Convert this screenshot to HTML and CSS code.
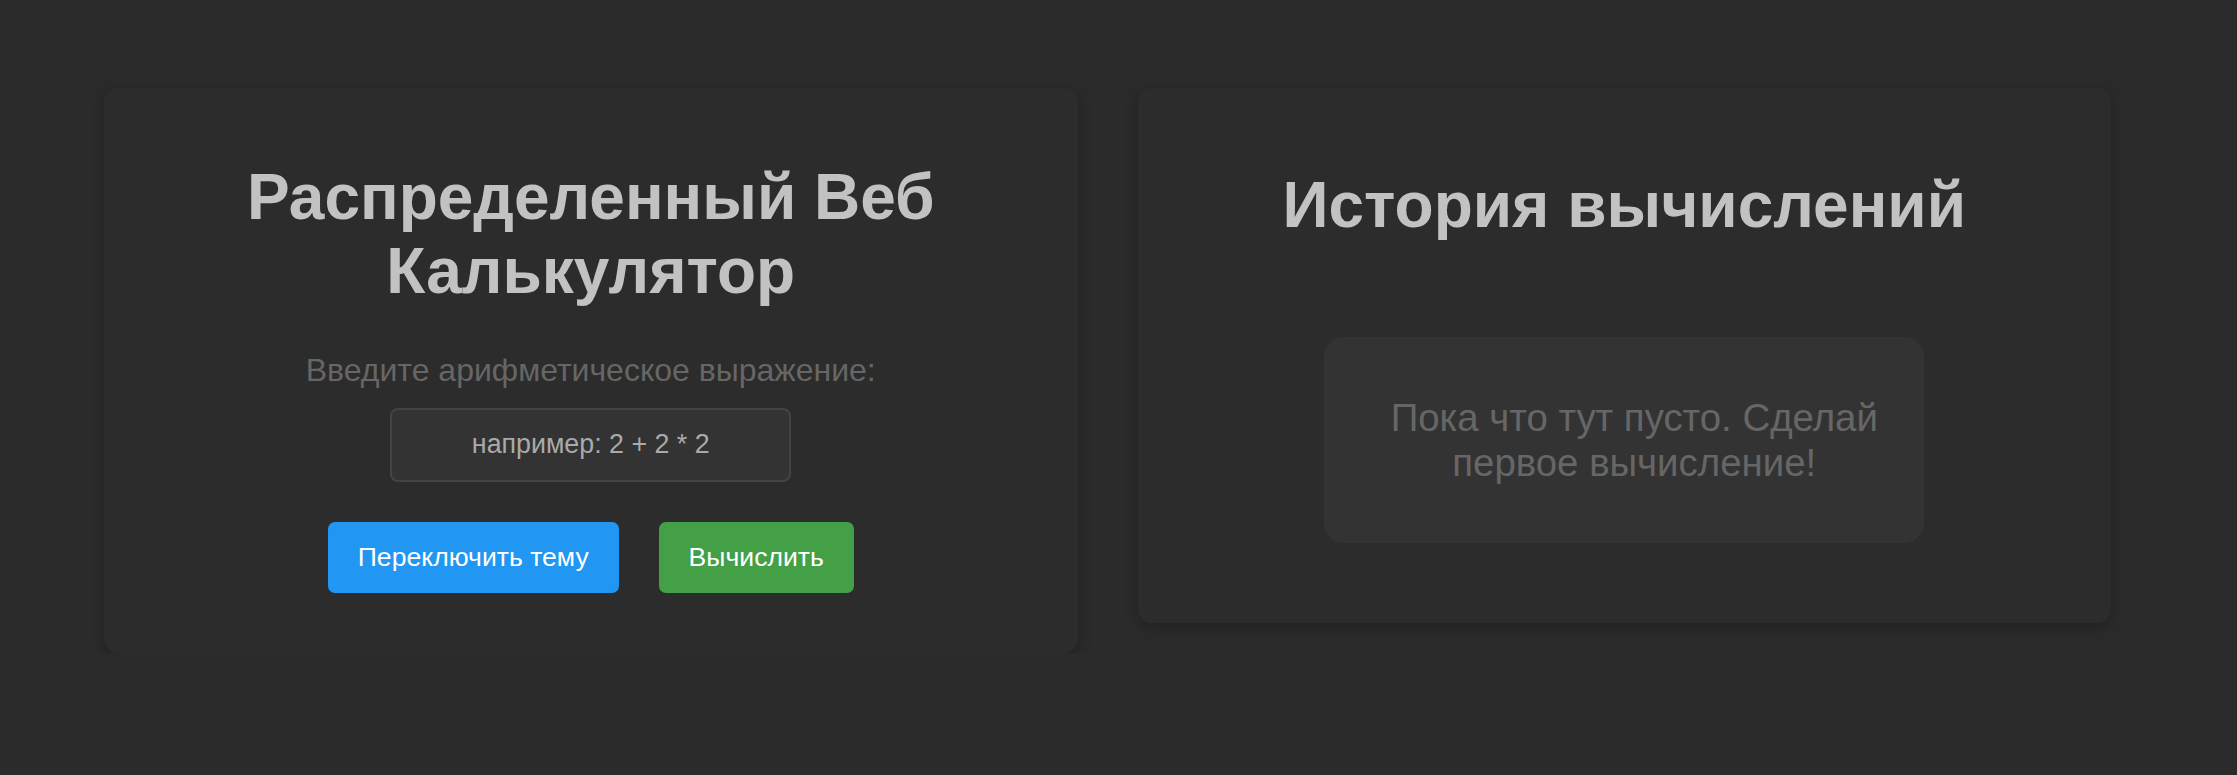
FILE: index.html
```html
<!DOCTYPE html>
<html lang="ru">
<head>
<meta charset="utf-8">
<title>Распределенный Веб Калькулятор</title>
<link rel="stylesheet" href="styles.css">
</head>
<body>
<main class="layout">
  <section class="card calc">
    <h1 class="title">Распределенный Веб Калькулятор</h1>
    <p class="label">Введите арифметическое выражение:</p>
    <input class="expr" type="text" placeholder="например: 2 + 2 * 2">
    <div class="actions">
      <button class="btn btn-blue" type="button">Переключить тему</button>
      <button class="btn btn-green" type="button">Вычислить</button>
    </div>
  </section>
  <section class="card history">
    <h2 class="title">История вычислений</h2>
    <div class="empty">
      <p>Пока что тут пусто. Сделай первое вычисление!</p>
    </div>
  </section>
</main>
</body>
</html>
```

FILE: styles.css
```css
html, body {
  margin: 0;
  padding: 0;
  background: #2b2b2b;
  font-family: "Liberation Sans", Arial, sans-serif;
}

.layout {
  display: flex;
  align-items: flex-start;
  gap: 60px;
  padding: 88px 126px 0 104px;
}

.card {
  flex: 1 1 0;
  background: #2c2c2c;
  border-radius: 14px;
  box-shadow: 0 4px 14px rgba(0, 0, 0, 0.25);
  display: flex;
  flex-direction: column;
  align-items: center;
  text-align: center;
}

.calc {
  padding: 73px 40px 60px;
}

.history {
  padding: 81px 40px 80px;
}

.title {
  margin: 0;
  font-size: 64px;
  font-weight: 700;
  color: #c2c2c2;
  line-height: 1.15;
}

.calc .title {
  max-width: 760px;
}

.label {
  margin: 44px 0 0;
  font-size: 32px;
  color: #666666;
  line-height: 1.15;
}

.expr {
  margin-top: 19px;
  box-sizing: border-box;
  width: 401px;
  height: 74px;
  background: #333333;
  border: 2px solid #444444;
  border-radius: 8px;
  font-family: "Liberation Sans", Arial, sans-serif;
  font-size: 26.8px;
  color: #bbbbbb;
  text-align: center;
  outline: none;
}

.expr::placeholder {
  color: #aaaaaa;
}

.actions {
  margin-top: 40px;
  display: flex;
  gap: 40px;
}

.btn {
  height: 71px;
  border: none;
  border-radius: 7px;
  font-family: "Liberation Sans", Arial, sans-serif;
  font-size: 26.6px;
  color: #ffffff;
  padding: 0 20px;
}

.btn-blue {
  background: #2196f3;
  width: 291px;
}

.btn-green {
  background: #43a047;
  width: 195px;
}

.empty {
  margin-top: 94px;
  box-sizing: border-box;
  width: 600px;
  height: 206px;
  background: #333333;
  border-radius: 20px;
  padding: 0 40px 0 60px;
  display: flex;
  align-items: center;
  justify-content: center;
}

.empty p {
  margin: 0;
  font-size: 38.4px;
  line-height: 45px;
  color: #666666;
}
```
